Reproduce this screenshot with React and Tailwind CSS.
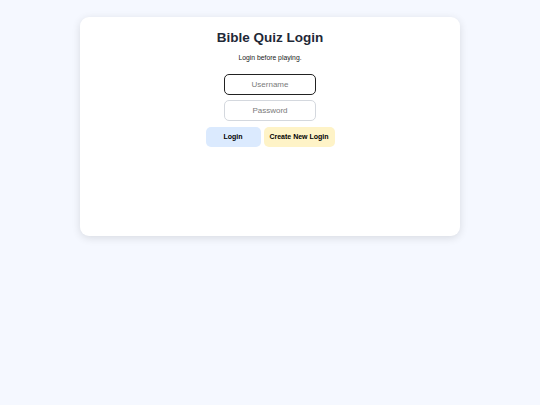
export default function App() {
  return (
    <div className="min-h-[405px] w-full bg-[#f5f8ff] pt-[17px]" style={{ fontFamily: '"Liberation Sans", Arial, sans-serif' }}>
      <div className="mx-auto flex h-[219px] w-[380px] flex-col items-center rounded-[9px] bg-white pt-[12px] shadow-[0_2px_8px_rgba(0,0,0,0.12)]">
        <h1 className="text-[13.5px] font-bold leading-[17px] text-[#1f2937]">Bible Quiz Login</h1>
        <p className="mt-[7px] text-[6.8px] leading-[9px] text-[#222]">Login before playing.</p>
        <input
          placeholder="Username"
          className="mt-[12px] h-[21px] w-[92px] rounded-[5px] border-[1.5px] border-[#222] text-center text-[8px] text-[#333] outline-none placeholder:text-[#7a7a7a]"
        />
        <input
          type="password"
          placeholder="Password"
          className="mt-[5px] h-[21px] w-[92px] rounded-[5px] border border-[#d4d8de] text-center text-[8px] text-[#333] outline-none placeholder:text-[#7a7a7a]"
        />
        <div className="mt-[6px] flex gap-[3px]">
          <button className="h-[20px] w-[55px] rounded-[5px] bg-[#dbeafe] text-[7px] font-bold text-black">Login</button>
          <button className="h-[20px] w-[71px] rounded-[5px] bg-[#fef3c7] text-[7px] font-bold text-black">Create New Login</button>
        </div>
      </div>
    </div>
  );
}
